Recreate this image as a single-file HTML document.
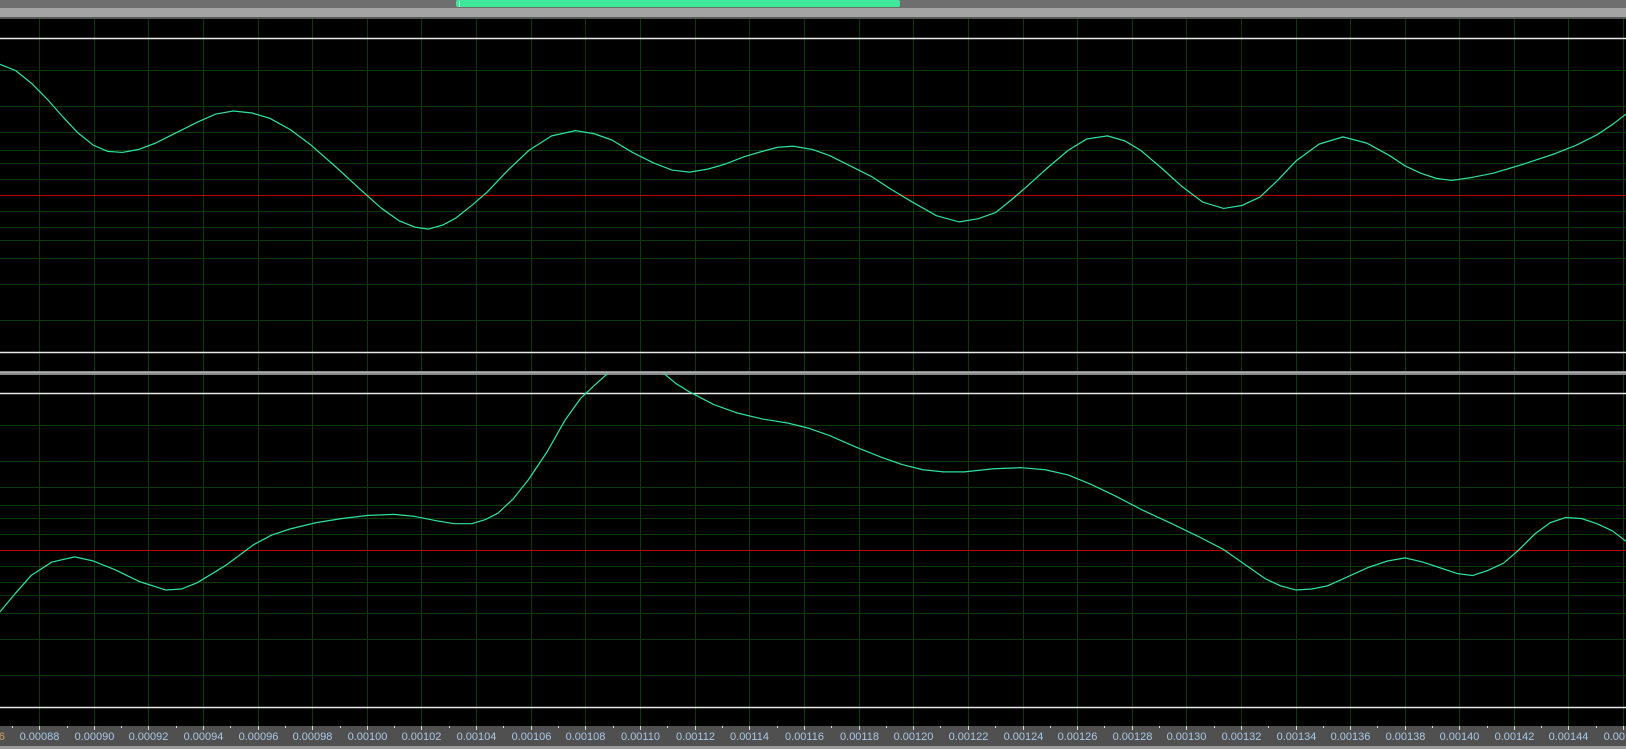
<!DOCTYPE html>
<html><head><meta charset="utf-8"><style>
html,body{margin:0;padding:0;background:#000;width:1626px;height:749px;overflow:hidden}
svg{display:block}
text{font-family:"Liberation Sans",sans-serif;font-size:11px;fill:#a9c8e6}
</style></head><body>
<svg width="1626" height="749" viewBox="0 0 1626 749" xmlns="http://www.w3.org/2000/svg">
<rect width="1626" height="749" fill="#000"/>
<rect x="0" y="0" width="1626" height="8" fill="#6e6e6e"/>
<rect x="0" y="8" width="1626" height="9" fill="#a4a4a4"/>
<rect x="0" y="17" width="1626" height="2" fill="#585858"/>
<rect x="456" y="0" width="444" height="7" rx="2" fill="#3ee89a"/>
<rect x="459" y="1" width="1" height="6" fill="#b8ffd8"/>
<g stroke="#0c3a0c" stroke-width="1">
<path d="M0 70.5H1626M0 106.5H1626M0 132.5H1626M0 150.5H1626M0 163.5H1626M0 179.5H1626M0 211.5H1626M0 227.5H1626M0 240.5H1626M0 258.5H1626M0 284.5H1626M0 320.5H1626"/>
<path d="M0 425.5H1626M0 461.5H1626M0 487.5H1626M0 505.5H1626M0 518.5H1626M0 534.5H1626M0 566.5H1626M0 582.5H1626M0 595.5H1626M0 613.5H1626M0 639.5H1626M0 675.5H1626"/>
<path d="M39.5 19V726M94.5 19V726M148.5 19V726M203.5 19V726M258.5 19V726M312.5 19V726M367.5 19V726M421.5 19V726M476.5 19V726M531.5 19V726M585.5 19V726M640.5 19V726M695.5 19V726M749.5 19V726M804.5 19V726M859.5 19V726M913.5 19V726M968.5 19V726M1023.5 19V726M1077.5 19V726M1132.5 19V726M1186.5 19V726M1241.5 19V726M1296.5 19V726M1350.5 19V726M1405.5 19V726M1459.5 19V726M1514.5 19V726M1568.5 19V726M1623.5 19V726"/>
</g>
<path d="M0 195.5H1626M0 550.5H1626" stroke="#c00000" stroke-width="1"/>
<path d="M0 38.5H1626M0 352.5H1626M0 393.5H1626M0 707.5H1626" stroke="#e8e8e8" stroke-width="1.5"/>
<rect x="0" y="371" width="1626" height="4" fill="#8a8a8a"/>
<rect x="0" y="372" width="1626" height="1" fill="#b0b0b0"/>
<defs><clipPath id="cb"><rect x="0" y="360" width="1626" height="340"/></clipPath></defs>
<g transform="scale(1.037)" fill="none" stroke="#2ee0a0" stroke-width="1.2" stroke-linejoin="round">
<polyline points="0,62 15,68 30,80 45,95 60,112 75,128 90,140 104,146 118,147 134,144 150,138 170,128 190,118 208,110 225,107 243,109 260,114 280,125 300,140 325,162 350,185 368,201 385,213 400,219 413,221 427,217 440,210 455,198 470,185 490,164 510,145 532,131 555,126 573,129 590,135 610,147 630,157 648,164 665,166 683,163 700,158 718,151 735,146 750,142 765,141 783,144 800,150 820,160 840,170 860,183 880,195 903,208 925,214 943,211 960,205 975,193 990,180 1010,162 1030,145 1048,134 1068,131 1085,136 1100,145 1120,162 1140,180 1160,195 1180,201 1198,198 1215,190 1232,174 1250,155 1272,139 1295,132 1318,138 1340,150 1355,160 1370,167 1385,172 1400,174 1420,171 1440,167 1470,158 1500,148 1520,140 1540,130 1555,120 1568,110"/>
<g clip-path="url(#cb)"><polyline points="0,590 15,572 30,555 50,542 72,537 90,541 110,549 135,561 160,569 175,568 190,562 218,545 245,525 262,516 280,510 305,504 330,500 355,497 380,496 400,498 420,502 438,505 455,505 468,501 480,495 495,481 510,462 528,435 545,405 560,384 575,370 585,361 590,355 630,355 640,360 652,370 665,378 688,390 710,398 735,404 760,408 780,413 800,420 825,431 850,441 870,448 890,453 910,455 930,455 958,452 985,451 1008,453 1030,458 1052,467 1075,478 1102,492 1130,505 1155,517 1180,530 1200,544 1220,558 1235,565 1250,569 1265,568 1280,565 1300,556 1320,547 1338,541 1355,538 1372,542 1390,548 1405,553 1420,555 1435,550 1450,543 1465,530 1480,515 1495,504 1510,499 1525,500 1540,505 1555,512 1568,522"/></g>
</g>
<rect x="0" y="726" width="1626" height="20" fill="#505050"/>
<rect x="0" y="746" width="1626" height="3" fill="#9a9a9a"/>
<g stroke="#d8d8d8" stroke-width="1">
<path d="M39.5 726v4M94.5 726v4M148.5 726v4M203.5 726v4M258.5 726v4M312.5 726v4M367.5 726v4M421.5 726v4M476.5 726v4M531.5 726v4M585.5 726v4M640.5 726v4M695.5 726v4M749.5 726v4M804.5 726v4M859.5 726v4M913.5 726v4M968.5 726v4M1023.5 726v4M1077.5 726v4M1132.5 726v4M1186.5 726v4M1241.5 726v4M1296.5 726v4M1350.5 726v4M1405.5 726v4M1459.5 726v4M1514.5 726v4M1568.5 726v4M1623.5 726v4"/>
<path d="M12.5 726v2M67.5 726v2M121.5 726v2M176.5 726v2M230.5 726v2M285.5 726v2M340.5 726v2M394.5 726v2M449.5 726v2M503.5 726v2M558.5 726v2M613.5 726v2M667.5 726v2M722.5 726v2M777.5 726v2M831.5 726v2M886.5 726v2M940.5 726v2M995.5 726v2M1050.5 726v2M1104.5 726v2M1159.5 726v2M1214.5 726v2M1268.5 726v2M1323.5 726v2M1377.5 726v2M1432.5 726v2M1487.5 726v2M1541.5 726v2M1596.5 726v2"/>
</g>
<g text-anchor="middle">
<text x="-15" y="740" style="fill:#d8a060">0.00086</text>
<text x="39.5" y="740">0.00088</text><text x="94.5" y="740">0.00090</text><text x="148.5" y="740">0.00092</text><text x="203.5" y="740">0.00094</text><text x="258.5" y="740">0.00096</text><text x="312.5" y="740">0.00098</text><text x="367.5" y="740">0.00100</text><text x="421.5" y="740">0.00102</text><text x="476.5" y="740">0.00104</text><text x="531.5" y="740">0.00106</text><text x="585.5" y="740">0.00108</text><text x="640.5" y="740">0.00110</text><text x="695.5" y="740">0.00112</text><text x="749.5" y="740">0.00114</text><text x="804.5" y="740">0.00116</text><text x="859.5" y="740">0.00118</text><text x="913.5" y="740">0.00120</text><text x="968.5" y="740">0.00122</text><text x="1023.5" y="740">0.00124</text><text x="1077.5" y="740">0.00126</text><text x="1132.5" y="740">0.00128</text><text x="1186.5" y="740">0.00130</text><text x="1241.5" y="740">0.00132</text><text x="1296.5" y="740">0.00134</text><text x="1350.5" y="740">0.00136</text><text x="1405.5" y="740">0.00138</text><text x="1459.5" y="740">0.00140</text><text x="1514.5" y="740">0.00142</text><text x="1568.5" y="740">0.00144</text><text x="1623.5" y="740">0.00146</text>
</g>
</svg>
</body></html>
